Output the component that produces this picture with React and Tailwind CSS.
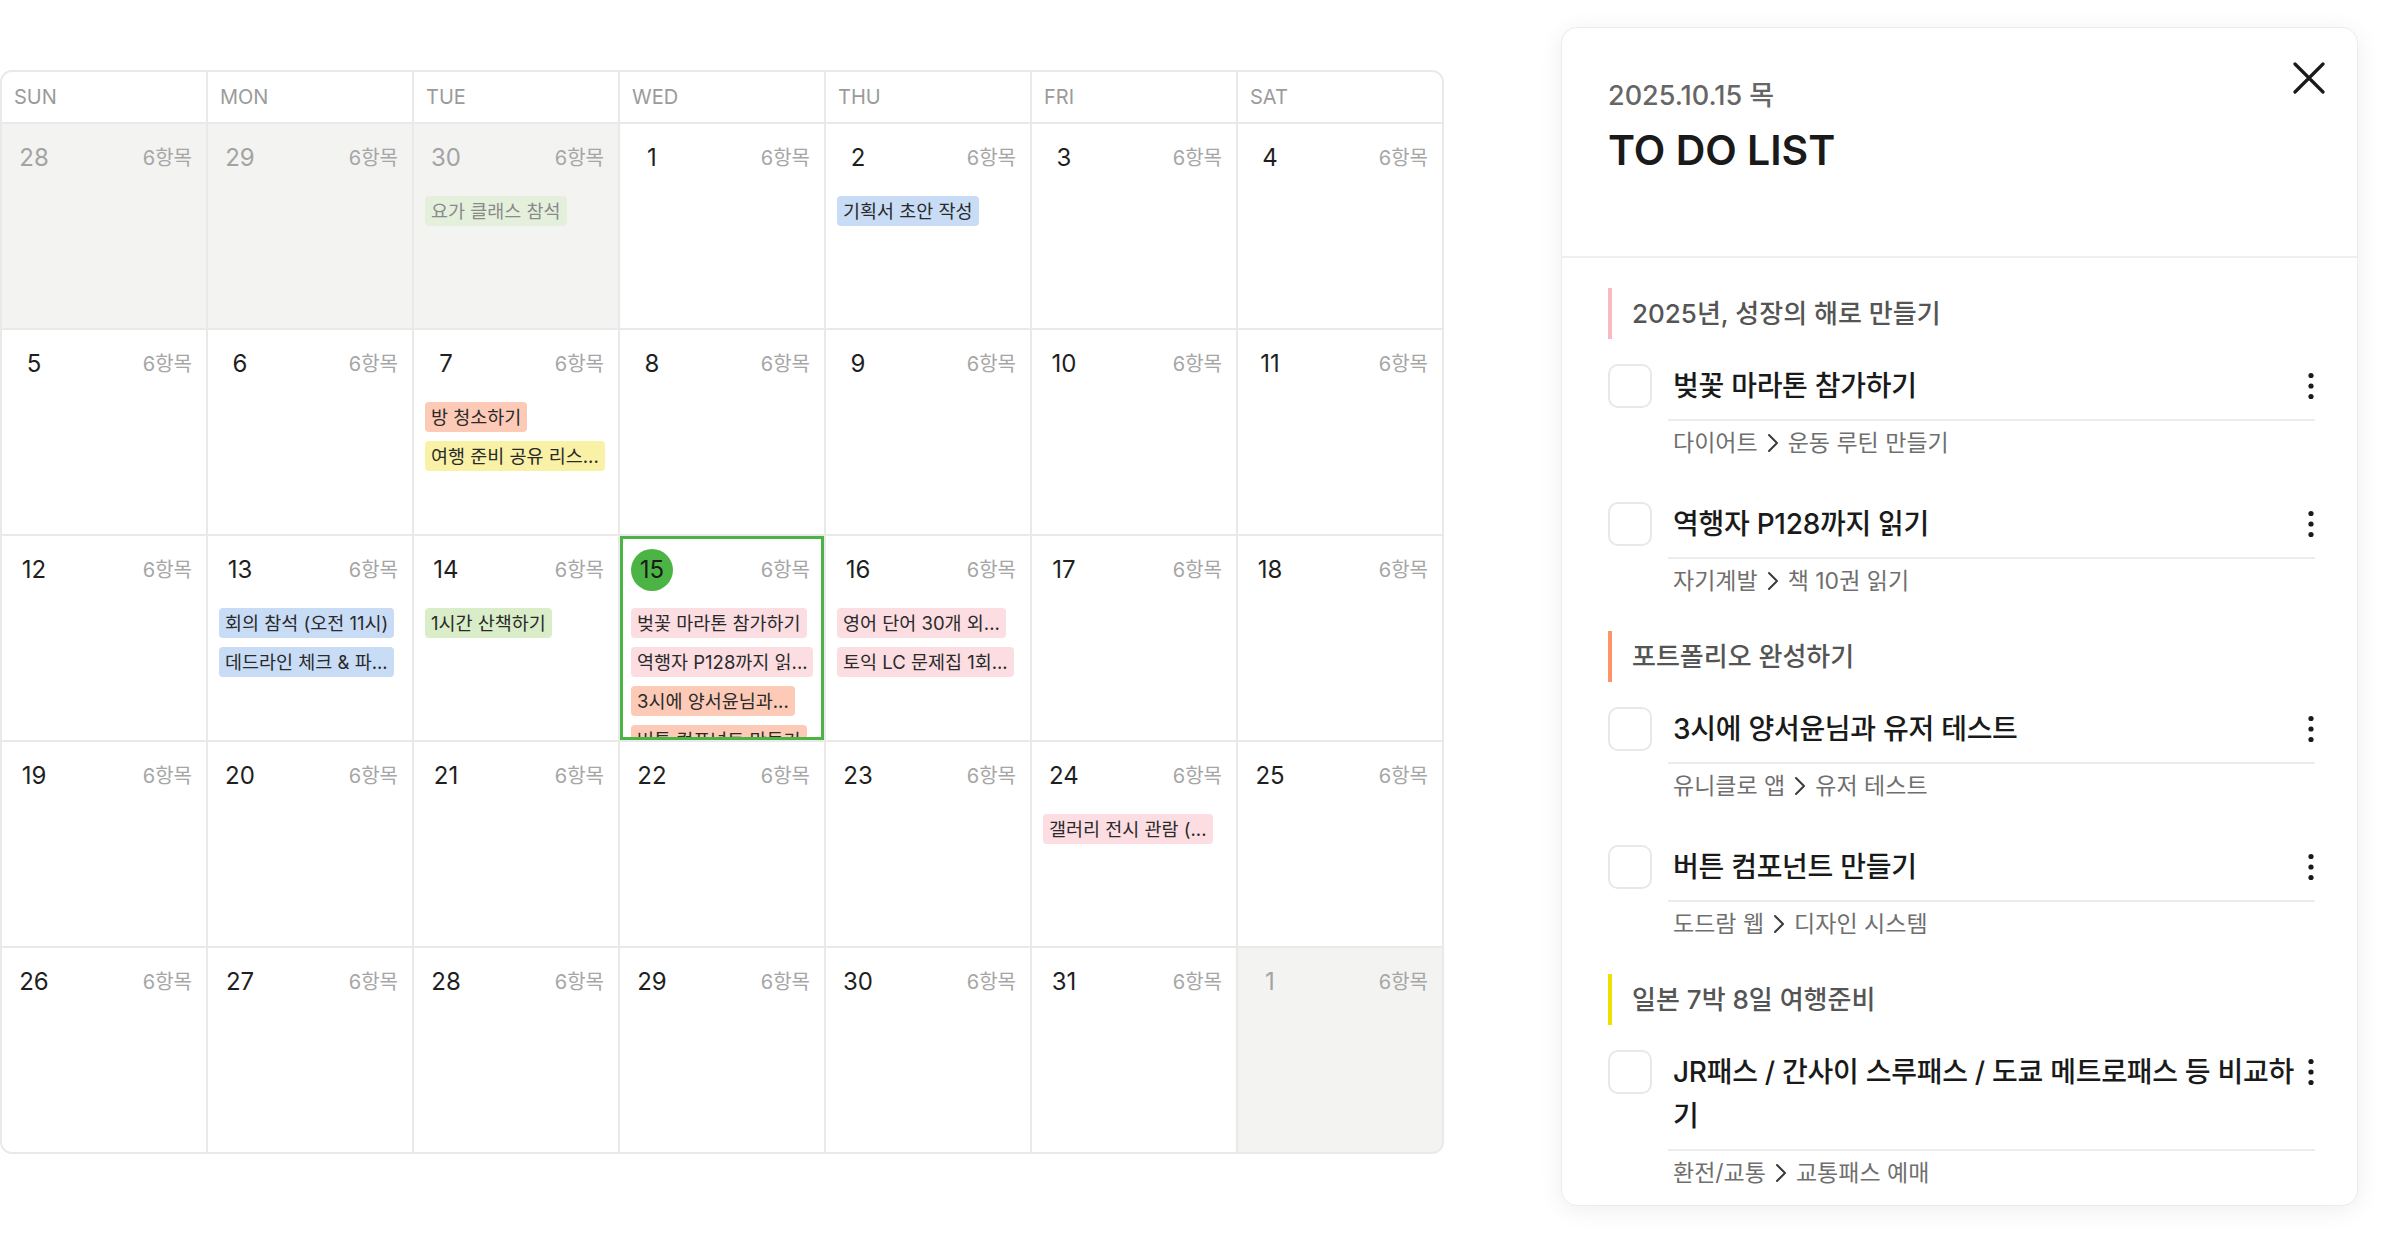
import React from "react";

const DAYS = ["SUN", "MON", "TUE", "WED", "THU", "FRI", "SAT"];

const CHIP = {
  green: "bg-[#d9edc9] text-[#2a2a2a]",
  greenMuted: "bg-[#e5f0dc] text-[#8a8a8a]",
  blue: "bg-[#c8dcf6] text-[#2a2a2a]",
  salmon: "bg-[#fccab6] text-[#2a2a2a]",
  yellow: "bg-[#f9f2a6] text-[#2a2a2a]",
  pink: "bg-[#fbdde2] text-[#2a2a2a]",
};

const weeks = [
  [
    { d: 28, o: true },
    { d: 29, o: true },
    { d: 30, o: true, e: [["요가 클래스 참석", "greenMuted"]] },
    { d: 1 },
    { d: 2, e: [["기획서 초안 작성", "blue"]] },
    { d: 3 },
    { d: 4 },
  ],
  [
    { d: 5 },
    { d: 6 },
    { d: 7, e: [["방 청소하기", "salmon"], ["여행 준비 공유 리스...", "yellow"]] },
    { d: 8 },
    { d: 9 },
    { d: 10 },
    { d: 11 },
  ],
  [
    { d: 12 },
    { d: 13, e: [["회의 참석 (오전 11시)", "blue"], ["데드라인 체크 & 파...", "blue"]] },
    { d: 14, e: [["1시간 산책하기", "green"]] },
    {
      d: 15,
      t: true,
      e: [
        ["벚꽃 마라톤 참가하기", "pink"],
        ["역행자 P128까지 읽...", "pink"],
        ["3시에 양서윤님과...", "salmon"],
        ["버튼 컴포넌트 만들기", "salmon"],
      ],
    },
    { d: 16, e: [["영어 단어 30개 외...", "pink"], ["토익 LC 문제집 1회...", "pink"]] },
    { d: 17 },
    { d: 18 },
  ],
  [
    { d: 19 },
    { d: 20 },
    { d: 21 },
    { d: 22 },
    { d: 23 },
    { d: 24, e: [["갤러리 전시 관람 (...", "pink"]] },
    { d: 25 },
  ],
  [
    { d: 26 },
    { d: 27 },
    { d: 28 },
    { d: 29 },
    { d: 30 },
    { d: 31 },
    { d: 1, o: true },
  ],
];

function Cell({ c }) {
  return (
    <div
      className={`relative h-[204px] overflow-hidden px-[11px] pt-[13px] ${
        c.o ? "bg-[#f3f3f2]" : "bg-white"
      }`}
    >
      <div className="flex items-center justify-between">
        <div
          className={`flex h-[42px] min-w-[42px] items-center justify-center rounded-full text-[24px] ${
            c.t ? "bg-[#4cb444] text-[#1a1a1a]" : c.o ? "text-[#a3a3a3]" : "text-[#1f1f1f]"
          }`}
        >
          {c.d}
        </div>
        <div className="mr-[3px] text-[20px] text-[#a6a6a6]">6항목</div>
      </div>
      {c.e && (
        <div className="mt-[17px] flex flex-col items-start gap-[9px]">
          {c.e.map(([txt, col], i) => (
            <div
              key={i}
              className={`h-[30px] max-w-full overflow-hidden whitespace-nowrap rounded-[4px] px-[6px] text-[18.5px] leading-[30px] ${CHIP[col]}`}
            >
              {txt}
            </div>
          ))}
        </div>
      )}
      {c.t && (
        <div className="pointer-events-none absolute inset-0 border-[3px] border-[#4cb444]" />
      )}
    </div>
  );
}

function Calendar() {
  return (
    <div className="mt-[70px] w-[1444px] shrink-0 overflow-hidden rounded-[12px] border-2 border-[#e9e9e9]">
      <div className="grid grid-cols-[repeat(7,204px)] gap-[2px] bg-[#e9e9e9]">
        {DAYS.map((d) => (
          <div key={d} className="flex h-[50px] items-center bg-white pl-[12px] text-[20px] text-[#9b9b9b]">
            {d}
          </div>
        ))}
        {weeks.flat().map((c, i) => (
          <Cell key={i} c={c} />
        ))}
      </div>
    </div>
  );
}

function Kebab() {
  return (
    <div className="flex h-[44px] w-[8px] shrink-0 items-center justify-center">
      <svg width="8" height="28" viewBox="0 0 8 28">
        <circle cx="4" cy="3.5" r="2.6" fill="#1a1a1a" />
        <circle cx="4" cy="14" r="2.6" fill="#1a1a1a" />
        <circle cx="4" cy="24.5" r="2.6" fill="#1a1a1a" />
      </svg>
    </div>
  );
}

function Chevron() {
  return (
    <svg width="16" height="24" viewBox="0 0 16 24" className="mx-[7px] inline-block">
      <path d="M4 4 L12 12 L4 20" fill="none" stroke="#3a3a3a" strokeWidth="2" strokeLinecap="round" strokeLinejoin="round" />
    </svg>
  );
}

function Item({ title, a, b, mt }) {
  return (
    <div className={`flex items-start gap-4 ${mt}`}>
      <div className="h-[44px] w-[44px] shrink-0 rounded-[10px] border-2 border-[#e8e8e8] bg-white" />
      <div className="min-w-0 flex-1">
        <div className="flex items-start justify-between border-b-2 border-[#ececec] pb-[11px]">
          <div className="pl-[5px] text-[28px] font-medium leading-[44px] tracking-[-0.01em] text-[#1a1a1a]">
            {title}
          </div>
          <Kebab />
        </div>
        <div className="mt-[7px] flex items-center pl-[5px] text-[23px] leading-[30px] text-[#6f6f6f]">
          <span>{a}</span>
          <Chevron />
          <span>{b}</span>
        </div>
      </div>
    </div>
  );
}

function Section({ color, label, mt }) {
  return (
    <div className={`flex h-[51px] items-stretch ${mt}`}>
      <div className={`w-[4px] ${color}`} />
      <div className="flex items-center pl-[20px] text-[26px] font-medium text-[#555555]">{label}</div>
    </div>
  );
}

function Panel() {
  return (
    <div className="relative mt-[27px] h-[1179px] w-[797px] shrink-0 overflow-hidden rounded-[16px] border border-[#ececec] bg-white shadow-[0_4px_24px_rgba(0,0,0,0.07)]">
      <div className="h-[230px] border-b-2 border-[#efefef] pl-[46px] pt-[51px]">
        <div className="text-[27px] font-medium leading-[34px] text-[#666666]">2025.10.15 목</div>
        <div className="mt-[13px] text-[41px] font-semibold leading-[48px] text-[#1a1a1a]">TO DO LIST</div>
      </div>
      <button className="absolute right-[32px] top-[34px]">
        <svg width="32" height="32" viewBox="0 0 32 32">
          <path d="M2 2 L30 30 M30 2 L2 30" stroke="#1a1a1a" strokeWidth="3.2" strokeLinecap="round" />
        </svg>
      </button>
      <div className="pl-[46px] pr-[42px] pt-[30px]">
        <Section color="bg-[#f9b8c2]" label="2025년, 성장의 해로 만들기" mt="" />
        <Item mt="mt-[25px]" title="벚꽃 마라톤 참가하기" a="다이어트" b="운동 루틴 만들기" />
        <Item mt="mt-[44px]" title="역행자 P128까지 읽기" a="자기계발" b="책 10권 읽기" />
        <Section color="bg-[#ff9466]" label="포트폴리오 완성하기" mt="mt-[35px]" />
        <Item mt="mt-[25px]" title="3시에 양서윤님과 유저 테스트" a="유니클로 앱" b="유저 테스트" />
        <Item mt="mt-[44px]" title="버튼 컴포넌트 만들기" a="도드람 웹" b="디자인 시스템" />
        <Section color="bg-[#f0e000]" label="일본 7박 8일 여행준비" mt="mt-[35px]" />
        <Item
          mt="mt-[25px]"
          title={
            <>
              <span className="whitespace-nowrap">JR패스 / 간사이 스루패스 / 도쿄 메트로패스 등 비교하</span>
              <br />기
            </>
          }
          a="환전/교통"
          b="교통패스 예매"
        />
      </div>
    </div>
  );
}

export default function App() {
  return (
    <div className="flex min-h-[1241px] w-[2393px] items-start gap-[117px] bg-white font-['Inter','Noto_Sans_CJK_KR',sans-serif]">
      <Calendar />
      <Panel />
    </div>
  );
}
